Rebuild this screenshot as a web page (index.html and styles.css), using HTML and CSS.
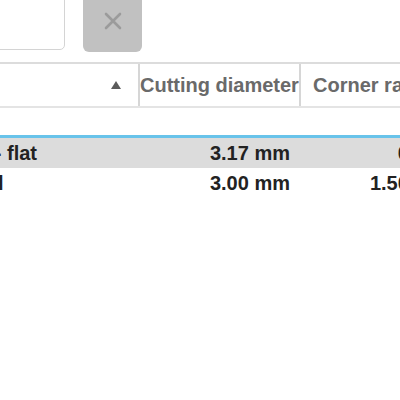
FILE: index.html
```html
<!DOCTYPE html>
<html lang="en">
<head>
  <meta charset="UTF-8">
  <title>Tool library</title>
  <link rel="stylesheet" href="styles.css">
</head>
<body>
<div class="pane">
  <div class="toolbar">
    <input class="search" type="text">
    <button class="clear" title="Clear">
      <svg width="18" height="18" viewBox="0 0 18 18">
        <path d="M2 2 L16 16 M16 2 L2 16" stroke="#9b9b9b" stroke-width="2.6" stroke-linecap="round"/>
      </svg>
    </button>
  </div>

  <div class="table">
    <div class="head">
      <div class="th name"><span class="sort"></span></div>
      <div class="th">Cutting diameter</div>
      <div class="th corner">Corner radius</div>
    </div>
    <div class="body">
      <div class="row selected">
        <div class="td name">#2 - flat</div>
        <div class="td num">3.17 mm</div>
        <div class="td num">0 mm</div>
      </div>
      <div class="row">
        <div class="td name">Ball</div>
        <div class="td num">3.00 mm</div>
        <div class="td num">1.50 mm</div>
      </div>
    </div>
  </div>
</div>
</body>
</html>
```

FILE: styles.css
```css
body {
  margin: 0;
  font-family: "Liberation Sans", Arial, sans-serif;
  background: #fff;
  overflow: hidden;
}

.pane {
  margin-left: -40px;
  width: 700px;
}

.toolbar {
  display: flex;
  align-items: flex-start;
  gap: 18px;
  margin-top: -12px;
}

.search {
  width: 105px;
  height: 62px;
  box-sizing: border-box;
  border: 1px solid #d4d4d4;
  border-radius: 5px;
  background: #fff;
}

.clear {
  width: 59px;
  height: 64px;
  border: none;
  border-radius: 6px;
  background: #c1c1c1;
  display: flex;
  justify-content: center;
  align-items: flex-start;
  padding: 24px 0 0 0;
}

.table {
  margin-top: 10px;
}

.head {
  display: grid;
  grid-template-columns: 178px 161px 160px;
  height: 46px;
  border-top: 2px solid #dcdcdc;
  border-bottom: 2px solid #e4e4e4;
  box-sizing: border-box;
}

.th {
  font-size: 20px;
  font-weight: bold;
  color: #6a6a6a;
  display: flex;
  align-items: center;
  white-space: nowrap;
  overflow: hidden;
  border-left: 2px solid #d6d6d6;
  padding-left: 0;
}

.th.name {
  border-left: none;
  justify-content: flex-end;
  padding-right: 17px;
}

.th.corner {
  padding-left: 12px;
}

.sort {
  width: 0;
  height: 0;
  border-left: 5px solid transparent;
  border-right: 5px solid transparent;
  border-bottom: 8px solid #5c5c5c;
}

.body {
  margin-top: 27px;
  border-top: 3px solid #68c3ea;
}

.row {
  display: grid;
  grid-template-columns: 178px 161px 160px;
  height: 30px;
  align-items: center;
}

.row.selected {
  background: #dcdcdc;
}

.td {
  font-size: 20px;
  font-weight: bold;
  color: #222;
  white-space: nowrap;
  overflow: hidden;
}

.td.name {
  padding-left: 7px;
}

.td.num {
  text-align: right;
  padding-right: 9px;
}
```
